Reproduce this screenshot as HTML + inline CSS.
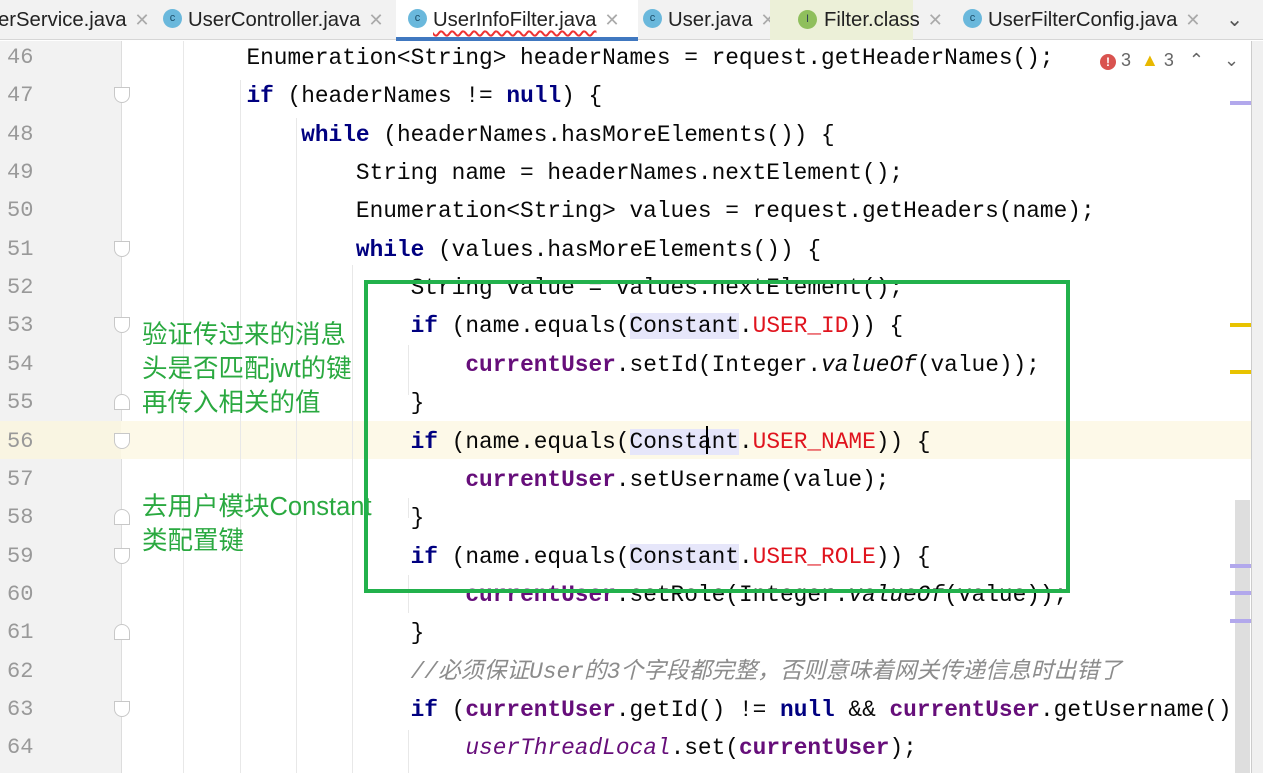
<!DOCTYPE html>
<html><head><meta charset="utf-8"><style>
*{margin:0;padding:0;box-sizing:border-box}
body{width:1263px;height:773px;overflow:hidden;background:#fff;position:relative;font-family:"Liberation Sans","Noto Sans CJK SC",sans-serif}
.tabs{position:absolute;left:0;top:0;width:1263px;height:40px;background:#f2f2f2;border-bottom:1px solid #d6d6d6}
.tab{position:absolute;top:0;height:40px;font-size:20.3px;color:#222;line-height:40px;white-space:nowrap}
.ic{display:inline-block;width:19px;height:19px;border-radius:50%;background:#6ab8dc;color:#1a4b66;font-size:11px;line-height:19px;text-align:center;vertical-align:middle;margin-right:6px;position:relative;top:-2px}
.x{color:#aaa;margin-left:8px;font-size:18px}
.gutter{position:absolute;left:0;top:41px;width:122px;height:732px;background:#f2f2f2;border-right:1px solid #ddd}
.ln{position:absolute;left:7px;font-family:"Liberation Mono",monospace;font-size:22px;color:#999;height:38px;line-height:40px}
.code{position:absolute;left:137px;font-family:"Liberation Mono",monospace;font-size:22.8px;color:#080808;white-space:pre;height:38px;line-height:40px}
.k{font-weight:bold;color:#000080}
.p{color:#660e7a;font-weight:bold}
.r{color:#e0141e}
.it{font-style:italic}
.hl{background:#e6e6fa}
.cm{color:#8c8c8c;font-style:italic;font-family:"Liberation Mono","Noto Sans CJK SC",monospace}
.guide{position:absolute;width:1px;background:#e8e8e8}
.fold{position:absolute;left:114px;width:16px;height:16px;border:1px solid #c8c8c8;background:#fff}
.note{position:absolute;left:142px;color:#2aa940;font-size:25.5px;line-height:34px;font-family:"Liberation Sans","Noto Sans CJK SC",sans-serif;white-space:nowrap}
#clip{position:absolute;left:0;top:0;width:1250px;height:773px;overflow:hidden}
</style></head><body>
<div class="tabs">
<div class="tab" style="left:-2px">erService.java<span class="x">✕</span></div>
<div class="tab" style="left:163px"><span class="ic">c</span>UserController.java<span class="x">✕</span></div>
<div class="tab" style="left:396px;width:242px;background:#fff;padding-left:12px;border-bottom:4px solid #4078c0;height:41px"><span class="ic">c</span><span style="text-decoration:underline wavy #e33;text-underline-offset:4px">UserInfoFilter.java</span><span class="x">✕</span></div>
<div class="tab" style="left:643px"><span class="ic">c</span>User.java<span class="x">✕</span></div>
<div class="tab" style="left:770px;width:143px;background:#ecf0d8"><span class="ic" style="background:#8fbf5c;color:#345;position:absolute;left:28px;top:10px">I</span><span style="margin-left:54px">Filter.class</span><span class="x">✕</span></div>
<div class="tab" style="left:963px"><span class="ic">c</span>UserFilterConfig.java<span class="x">✕</span></div>
<div class="tab" style="left:1226px;color:#555">⌄</div>
</div>
<div class="gutter"></div>
<div style="position:absolute;left:1251px;top:41px;width:12px;height:732px;background:#f0f0f0;border-left:1px solid #ccc"></div>
<div style="position:absolute;left:1235px;top:500px;width:15px;height:273px;background:#dedede"></div>
<div style="position:absolute;left:0;top:421px;width:1251px;height:38px;background:#fdf9e8"></div>
<div style="position:absolute;left:0;top:421px;width:121px;height:38px;background:#f9f5e2"></div>
<div class="guide" style="left:183px;top:41px;height:732px"></div>
<div class="guide" style="left:240px;top:80px;height:693px"></div>
<div class="guide" style="left:296px;top:118px;height:655px"></div>
<div class="guide" style="left:352px;top:265px;height:508px"></div>
<div class="guide" style="left:408px;top:345px;height:50px"></div>
<div class="guide" style="left:408px;top:498px;height:20px"></div>
<div class="guide" style="left:408px;top:575px;height:38px"></div>
<div class="guide" style="left:408px;top:730px;height:43px"></div>
<div id="clip"><div id="lines"></div></div>
<div style="position:absolute;left:1100px;top:50px;font-size:18px;color:#666;white-space:nowrap;background:#fff"><span style="display:inline-block;width:16px;height:16px;border-radius:50%;background:#d9534f;color:#fff;font-size:12px;text-align:center;line-height:16px;font-weight:bold">!</span> 3 &nbsp;<span style="color:#e8b800">▲</span> 3 &nbsp;&nbsp;<span>⌃</span>&nbsp;&nbsp;&nbsp;&nbsp;<span>⌄</span></div>
<div style="position:absolute;left:1230px;top:101px;width:21px;height:4px;background:#b2a8ec"></div>
<div style="position:absolute;left:1230px;top:323px;width:21px;height:4px;background:#e8c300"></div>
<div style="position:absolute;left:1230px;top:370px;width:21px;height:4px;background:#e8c300"></div>
<div style="position:absolute;left:1230px;top:564px;width:21px;height:4px;background:#b2a8ec"></div>
<div style="position:absolute;left:1230px;top:591px;width:21px;height:4px;background:#b2a8ec"></div>
<div style="position:absolute;left:1230px;top:619px;width:21px;height:4px;background:#b2a8ec"></div>
<div class="note" style="top:318px">验证传过来的消息<br>头是否匹配jwt的键<br>再传入相关的值</div>
<div class="note" style="top:490px">去用户模块Constant<br>类配置键</div>
<div style="position:absolute;left:364px;top:280px;width:706px;height:313px;border:4px solid #22b14c"></div>
<div style="position:absolute;left:706px;top:426px;width:2px;height:28px;background:#000"></div>
<script>
const L=[
[46,'        Enumeration&lt;String&gt; headerNames = request.getHeaderNames();'],
[47,'        <span class=k>if</span> (headerNames != <span class=k>null</span>) {',1],
[48,'            <span class=k>while</span> (headerNames.hasMoreElements()) {'],
[49,'                String name = headerNames.nextElement();'],
[50,'                Enumeration&lt;String&gt; values = request.getHeaders(name);'],
[51,'                <span class=k>while</span> (values.hasMoreElements()) {',1],
[52,'                    String value = values.nextElement();'],
[53,'                    <span class=k>if</span> (name.equals(<span class=hl>Constant</span>.<span class=r>USER_ID</span>)) {',1],
[54,'                        <span class=p>currentUser</span>.setId(Integer.<span class=it>valueOf</span>(value));'],
[55,'                    }',2],
[56,'                    <span class=k>if</span> (name.equals(<span class=hl>Constant</span>.<span class=r>USER_NAME</span>)) {',1],
[57,'                        <span class=p>currentUser</span>.setUsername(value);'],
[58,'                    }',2],
[59,'                    <span class=k>if</span> (name.equals(<span class=hl>Constant</span>.<span class=r>USER_ROLE</span>)) {',1],
[60,'                        <span class=p>currentUser</span>.setRole(Integer.<span class=it>valueOf</span>(value));'],
[61,'                    }',2],
[62,'                    <span class=cm>//必须保证User的3个字段都完整，否则意味着网关传递信息时出错了</span>'],
[63,'                    <span class=k>if</span> (<span class=p>currentUser</span>.getId() != <span class=k>null</span> &amp;&amp; <span class=p>currentUser</span>.getUsername() != null',1],
[64,'                        <span class=p style="font-weight:normal;font-style:italic">userThreadLocal</span>.set(<span class=p>currentUser</span>);']];
let h='';
L.forEach((l,i)=>{const t=38+i*38.35;
h+=`<div class=ln style="top:${t}px">${l[0]}</div><div class=code style="top:${t}px">${l[1]}</div>`;
if(l[2])h+=`<div class=fold style="top:${t+11}px;${l[2]==1?'border-radius:0 0 8px 8px':'border-radius:8px 8px 0 0'}"></div>`;});
document.getElementById('lines').innerHTML=h;
</script>
</body></html>
